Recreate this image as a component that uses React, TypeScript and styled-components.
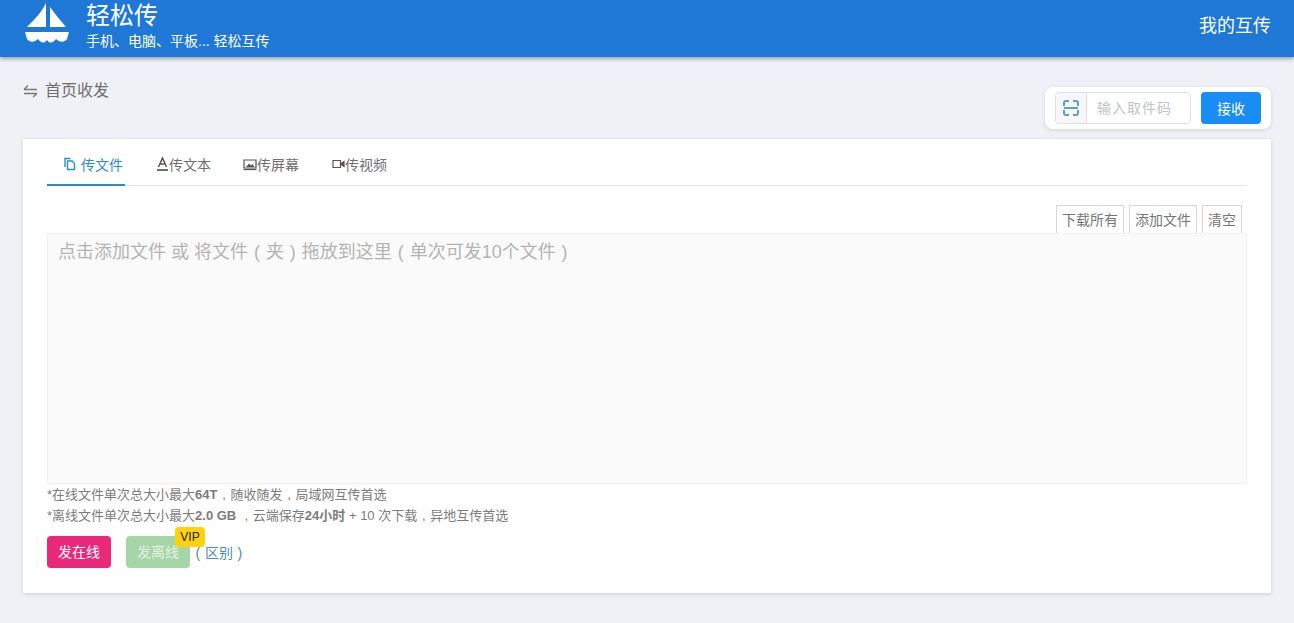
import React from "react";
import styled, { createGlobalStyle } from "styled-components";

const Global = createGlobalStyle`
  html, body { margin: 0; padding: 0; background: #f0f1f6; }
  body { font-family: "Liberation Sans", "Noto Sans CJK SC", sans-serif; overflow: hidden; }
  * { box-sizing: border-box; }
`;

const Page = styled.div`
  width: 1294px;
  height: 623px;
  background: #f0f1f6;
`;

const Header = styled.header`
  height: 57px;
  background: #1f78d5;
  box-shadow: 0 2px 4px rgba(40, 60, 90, 0.45);
  display: flex;
  align-items: flex-start;
  justify-content: space-between;
  padding: 0 23px 0 24px;
  color: #fff;
`;

const Brand = styled.div`
  display: flex;
  align-items: flex-start;
  gap: 16px;
`;

const LogoMark = styled.svg`
  width: 46px;
  height: 44px;
  margin-top: 2px;
  flex: none;
`;

const BrandText = styled.div`
  display: flex;
  flex-direction: column;
`;

const BrandName = styled.div`
  font-size: 24px;
  line-height: 28px;
  margin-top: 2px;
`;

const BrandSlogan = styled.div`
  font-size: 14px;
  line-height: 18px;
  margin-top: 2px;
  white-space: nowrap;
`;

const HeaderLink = styled.div`
  font-size: 18px;
  line-height: 26px;
  margin-top: 13px;
`;

const Main = styled.main`
  padding: 0 23px;
`;

const TopRow = styled.div`
  display: flex;
  justify-content: space-between;
  align-items: flex-start;
  height: 82px;
`;

const Crumb = styled.div`
  display: flex;
  align-items: center;
  gap: 7px;
  margin-top: 23px;
  font-size: 16px;
  line-height: 22px;
  color: #6e6e6e;
`;

const ReceiveBox = styled.div`
  margin-top: 30px;
  width: 226px;
  height: 42px;
  background: #fff;
  border-radius: 8px;
  box-shadow: 0 1px 4px rgba(0, 0, 0, 0.12);
  display: flex;
  align-items: center;
  padding: 0 10px;
  gap: 10px;
`;

const CodeField = styled.div`
  display: flex;
  flex: none;
  width: 136px;
  height: 32px;
  border: 1px solid #dcdfe6;
  border-radius: 4px;
  overflow: hidden;
`;

const ScanAddon = styled.div`
  width: 31px;
  background: #f5f7fa;
  border-right: 1px solid #dcdfe6;
  display: flex;
  align-items: center;
  justify-content: center;
  flex: none;
`;

const CodeHint = styled.div`
  flex: 1;
  font-size: 14px;
  line-height: 30px;
  padding-left: 10px;
  letter-spacing: 1px;
  color: #c0c3c9;
  white-space: nowrap;
`;

const ReceiveButton = styled.button`
  width: 60px;
  height: 32px;
  padding: 0;
  border: 0;
  border-radius: 4px;
  background: #1a8cf5;
  color: #fff;
  font: inherit;
  font-size: 14px;
`;

const Card = styled.section`
  background: #fff;
  height: 454px;
  padding: 0 24px;
  box-shadow: 0 1px 4px rgba(0, 0, 0, 0.16);
`;

const Tabs = styled.nav`
  display: flex;
  height: 47px;
  border-bottom: 1px solid #e4e7ed;
`;

const Tab = styled.div<{ $active?: boolean; $width: number; $gap?: number }>`
  width: ${(p) => p.$width}px;
  height: 47px;
  display: flex;
  align-items: center;
  justify-content: flex-end;
  gap: ${(p) => p.$gap ?? 0}px;
  padding: 5px 2px 0 0;
  font-size: 14px;
  color: ${(p) => (p.$active ? "#2a8bd0" : "#707070")};
  border-bottom: 2px solid ${(p) => (p.$active ? "#2a8bd0" : "transparent")};
`;

const Actions = styled.div`
  height: 47px;
  display: flex;
  justify-content: flex-end;
  align-items: flex-end;
  gap: 5px;
  padding-right: 5px;
`;

const ActionButton = styled.div`
  height: 28px;
  padding: 0 5px;
  border: 1px solid #d6d6d6;
  border-bottom: 0;
  font-size: 14px;
  line-height: 28px;
  color: #757575;
  background: #fff;
`;

const DropZone = styled.div`
  height: 251px;
  background: #fafafa;
  border: 1px solid #f1f1f1;
  border-radius: 2px;
  padding: 5px 10px;
  font-size: 18px;
  line-height: 26px;
  color: #b4b4b4;
`;

const Notes = styled.div`
  font-size: 13px;
  line-height: 21px;
  color: #7c7c7c;
`;

const Paren = styled.span`
  margin: 0 0.33em;
`;

const Comma = styled.span`
  margin: 0 0.36em;
`;

const Buttons = styled.div`
  display: flex;
  align-items: center;
  margin-top: 10px;
`;

const SendButton = styled.div<{ $bg: string; $dim?: boolean }>`
  position: relative;
  width: 64px;
  height: 32px;
  border-radius: 4px;
  background: ${(p) => p.$bg};
  color: ${(p) => (p.$dim ? "#e4f2e4" : "#fff")};
  font-size: 14px;
  line-height: 32px;
  text-align: center;
`;

const SecondSend = styled(SendButton)`
  margin-left: 15px;
`;

const VipBadge = styled.span`
  position: absolute;
  top: -9px;
  right: -15px;
  width: 30px;
  height: 20px;
  border-radius: 4px;
  background: #fdd10b;
  color: #222;
  font-size: 12px;
  line-height: 20px;
  text-align: center;
`;

const DiffLink = styled.span`
  margin-left: 1px;
  font-size: 14px;
  color: #4a8db5;
  white-space: nowrap;
`;

const Icon = styled.svg`
  flex: none;
`;

export default function App() {
  return (
    <Page>
      <Global />
      <Header>
        <Brand>
          <LogoMark viewBox="0 0 46 44">
            <path d="M22 1 L22 25 L3 25 C10 18 18 10 22 1 Z" fill="#fff" />
            <path d="M26 5 C31 12 37 19 42 25 L26 25 Z" fill="#fff" />
            <path
              d="M1 30 H45 L43 37 C40 41 35 40 32 37 C29 41 26 42 23 38 C20 42 17 41 14 37 C11 40 6 41 3 37 Z"
              fill="#fff"
            />
          </LogoMark>
          <BrandText>
            <BrandName>轻松传</BrandName>
            <BrandSlogan>手机、电脑、平板... 轻松互传</BrandSlogan>
          </BrandText>
        </Brand>
        <HeaderLink>我的互传</HeaderLink>
      </Header>
      <Main>
        <TopRow>
          <Crumb>
            <Icon width="15" height="14" viewBox="0 0 15 14" fill="none" stroke="#777" strokeWidth="1.3">
              <path d="M1 5.5 H14 M1 5.5 L5 1.5 M14 9.5 H1 M14 9.5 L10 13" />
            </Icon>
            首页收发
          </Crumb>
          <ReceiveBox>
            <CodeField>
              <ScanAddon>
                <Icon width="16" height="16" viewBox="0 0 16 16" fill="none" stroke="#5f9ccf" strokeWidth="2">
                  <path d="M1 6 V3 A2 2 0 0 1 3 1 H6 M10 1 H13 A2 2 0 0 1 15 3 V6 M1 10 V13 A2 2 0 0 0 3 15 H6 M10 15 H13 A2 2 0 0 0 15 13 V10 M1 8 H15" />
                </Icon>
              </ScanAddon>
              <CodeHint>输入取件码</CodeHint>
            </CodeField>
            <ReceiveButton>接收</ReceiveButton>
          </ReceiveBox>
        </TopRow>
        <Card>
          <Tabs>
            <Tab $active $width={78} $gap={4}>
              <Icon width="14" height="14" viewBox="0 0 14 14" fill="none" stroke="#2a8bd0" strokeWidth="1.4">
                <path d="M2 10 V1.5 H7.5 M4.5 4 H9 L11.5 6.5 V12.5 H4.5 Z" />
              </Icon>
              传文件
            </Tab>
            <Tab $width={88}>
              <Icon width="13" height="14" viewBox="0 0 13 14" fill="none" stroke="#555" strokeWidth="1.5">
                <path d="M2.5 10 L6.5 1 L10.5 10 M4 7 H9" />
                <path d="M1 13 H12" strokeWidth="1.7" />
              </Icon>
              传文本
            </Tab>
            <Tab $width={88}>
              <Icon width="14" height="13" viewBox="0 0 14 13" fill="none" stroke="#555" strokeWidth="1.2">
                <path d="M1 2 H13 V10 H1 Z" />
                <path d="M3 9 L6 5.5 L8 7.5 L9.5 6 L11.5 9 Z" fill="#555" stroke="none" />
                <path d="M0.5 11.5 H13.5" />
              </Icon>
              传屏幕
            </Tab>
            <Tab $width={88}>
              <Icon width="13" height="12" viewBox="0 0 13 12" fill="none" stroke="#555" strokeWidth="1.2">
                <path d="M1 2.5 H8.5 V9.5 H1 Z" />
                <path d="M9 5.5 L12 3.5 V8.5 L9 6.5 Z" fill="#555" />
              </Icon>
              传视频
            </Tab>
          </Tabs>
          <Actions>
            <ActionButton>下载所有</ActionButton>
            <ActionButton>添加文件</ActionButton>
            <ActionButton>清空</ActionButton>
          </Actions>
          <DropZone>
            点击添加文件 或 将文件<Paren>(</Paren>夹<Paren>)</Paren>拖放到这里<Paren>(</Paren>单次可发10个文件<Paren>)</Paren>
          </DropZone>
          <Notes>
            <div>
              *在线文件单次总大小最大<b>64T</b><Comma>,</Comma>随收随发<Comma>,</Comma>局域网互传首选
            </div>
            <div>
              *离线文件单次总大小最大<b>2.0 GB</b> <Comma>,</Comma>云端保存<b>24小时</b> + 10 次下载<Comma>,</Comma>异地互传首选
            </div>
          </Notes>
          <Buttons>
            <SendButton $bg="#e9287a">发在线</SendButton>
            <SecondSend $bg="#a5d6a7" $dim>
              发离线
              <VipBadge>VIP</VipBadge>
            </SecondSend>
            <DiffLink>
              <Paren>(</Paren>区别<Paren>)</Paren>
            </DiffLink>
          </Buttons>
        </Card>
      </Main>
    </Page>
  );
}
